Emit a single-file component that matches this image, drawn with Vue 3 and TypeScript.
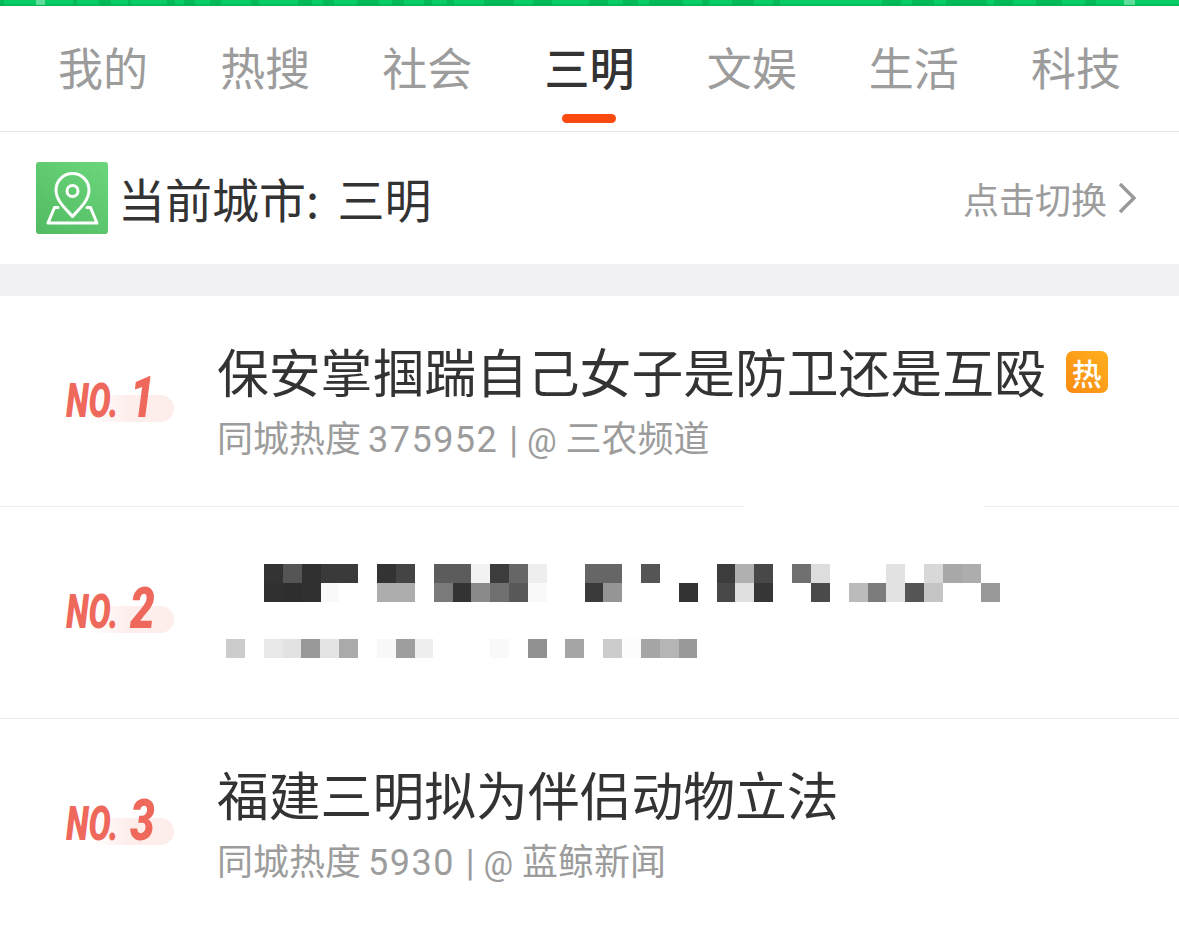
<script setup lang="ts">
type NewsItem = {
  rank: number
  title?: string
  hot?: boolean
  heat?: string
  source?: string
}

const tabs = ['我的', '热搜', '社会', '三明', '文娱', '生活', '科技']
const activeTab = '三明'

const items: NewsItem[] = [
  { rank: 1, title: '保安掌掴踹自己女子是防卫还是互殴', hot: true, heat: '375952', source: '三农频道' },
  { rank: 2 },
  { rank: 3, title: '福建三明拟为伴侣动物立法', heat: '5930', source: '蓝鲸新闻' },
]

// cut-off text of the banner above, as [left, width] pairs
const stripMarks: number[][] = [
  [0, 4], [73, 4], [99, 12], [128, 3], [167, 8], [184, 11], [210, 11], [251, 8], [298, 14], [323, 11],
  [357, 22], [392, 12], [424, 8], [447, 7], [484, 30], [533, 19], [589, 19], [623, 15], [649, 34],
  [702, 7], [732, 22], [773, 7], [882, 19], [912, 22], [946, 41], [994, 19], [1036, 26], [1085, 11],
]
const stripLights: number[][] = [[36, 9], [1124, 11]]

// grey values of the blurred-out headline, one entry per mosaic cell, '' = blank
const titleMosaic: string[][] = [
  ['333', '555', '303030', '3a3a3a', '3a3a3a', '', '333', '444', '', '5c5c5c', '5c5c5c', 'f2f2f2', '3c3c3c', '666', 'eee', '', '', '666', '666', '', '555', '', '', '', '3c3c3c', 'b0b0b0', '484848', '', '707070', 'ddd', '', '', '', 'e2e2e2', '', 'd8d8d8', 'a8a8a8', 'adadad', ''],
  ['303030', '2e2e2e', '303030', 'f9f9f9', '', '', 'adadad', 'adadad', '', '7a7a7a', '333', '8a8a8a', '707070', '585858', 'f9f9f9', '', '', '3a3a3a', '959595', '', '', '', '333', '', '484848', 'e0e0e0', '363636', '', '', '4a4a4a', '', 'bbb', '7c7c7c', 'e2e2e2', '555', 'c5c5c5', '', '', '999'],
]
const metaMosaic: string[] = ['ccc', '', 'e8e8e8', 'e2e2e2', '999', 'e4e4e4', 'aaa', '', 'f8f8f8', '9e9e9e', 'eee', '', '', '', 'f9f9f9', '', '919191', '', 'a5a5a5', '', 'ccc', 'fcfcfc', 'a5a5a5', 'b5b5b5', '999']

function cellColor(value: string) {
  return value ? `#${value}` : 'transparent'
}

function markStyle(mark: number[]) {
  return { left: `${mark[0]}px`, width: `${mark[1]}px` }
}
</script>

<template>
  <main class="page">
    <div class="top-strip">
      <span v-for="mark in stripMarks" :key="mark[0]" class="strip-mark" :style="markStyle(mark)"></span>
      <span v-for="mark in stripLights" :key="mark[0]" class="strip-mark light" :style="markStyle(mark)"></span>
    </div>

    <nav class="tabs">
      <div v-for="tab in tabs" :key="tab" class="tab" :class="{ active: tab === activeTab }">
        {{ tab }}
      </div>
    </nav>

    <section class="city-row">
      <div class="city-left">
        <span class="city-icon">
          <svg viewBox="0 0 72 72" width="72" height="72" fill="none" stroke="#fff" stroke-width="3" stroke-linejoin="round" stroke-linecap="round">
            <path d="M36.500 54.500 C30 47 20 39 20 28 a16.500 16.500 0 0 1 33 0 C53 39 43 47 36.500 54.500 Z" />
            <circle cx="36.500" cy="29" r="5.500" />
            <path d="M22 45.500 H18.500 L12 61 H61 L54.500 45.500 H51" />
          </svg>
        </span>
        <span class="city-name">当前城市: 三明</span>
      </div>
      <div class="city-switch">
        点击切换
        <svg viewBox="0 0 20 32" width="20" height="32" fill="none" stroke="#999" stroke-width="3.4">
          <path d="M3 2 L17 16 L3 30" />
        </svg>
      </div>
    </section>

    <div class="band"></div>

    <article v-for="item in items" :key="item.rank" class="news-item" :class="{ masked: !item.title }">
      <div class="rank">
        <span class="rank-pill"></span>
        <span class="rank-text"><span class="rank-no">NO.</span><span class="rank-num">{{ item.rank }}</span></span>
      </div>

      <div v-if="item.title" class="news-body">
        <h3 class="news-title">
          {{ item.title }}
          <span v-if="item.hot" class="hot-badge">热</span>
        </h3>
        <p class="news-meta">同城热度 <span class="heat">{{ item.heat }}</span> | <span class="at">@</span> {{ item.source }}</p>
      </div>

      <div v-else class="news-body mosaic-body">
        <div class="mosaic-title">
          <div v-for="(row, r) in titleMosaic" :key="r" class="mosaic-row">
            <span v-for="(cell, c) in row" :key="c" class="cell" :style="{ background: cellColor(cell) }"></span>
          </div>
        </div>
        <div class="mosaic-row mosaic-meta">
          <span v-for="(cell, c) in metaMosaic" :key="c" class="cell" :style="{ background: cellColor(cell) }"></span>
        </div>
      </div>
    </article>
  </main>
</template>

<style scoped>
.page {
  width: 1179px;
  height: 928px;
  overflow: hidden;
  background: #fff;
  font-family: 'Noto Sans CJK SC', 'Noto Sans', sans-serif;
}

.top-strip {
  position: relative;
  height: 6px;
  overflow: hidden;
  background: linear-gradient(#08cc64, #08cc64 3px, #02b552);
}

.strip-mark {
  position: absolute;
  top: 0;
  height: 5px;
  background: rgba(0, 150, 60, 0.3);
}

.strip-mark.light {
  background: rgba(255, 255, 255, 0.35);
}

.tabs {
  display: grid;
  grid-template-columns: repeat(7, 1fr);
  height: 125px;
  padding: 0 22px;
  border-bottom: 1px solid #e4e4e4;
}

.tab {
  position: relative;
  padding-top: 29px;
  text-align: center;
  font-size: 45px;
  line-height: 64px;
  color: #9c9c9c;
}

.tab.active {
  color: #333;
  font-weight: 500;
}

.tab.active::after {
  content: '';
  position: absolute;
  left: 50%;
  bottom: 8px;
  width: 54px;
  height: 9px;
  margin-left: -27px;
  border-radius: 5px;
  background: #fa4a10;
}

.city-row {
  display: flex;
  align-items: center;
  justify-content: space-between;
  height: 132px;
  padding: 0 42px 0 36px;
}

.city-left {
  display: flex;
  align-items: center;
  gap: 10px;
}

.city-icon {
  display: block;
  width: 72px;
  height: 72px;
  border-radius: 3px;
  background: linear-gradient(35deg, #52bb62, #6cd67c);
}

.city-icon svg {
  display: block;
}

.city-name {
  font-size: 47px;
  line-height: 64px;
  word-spacing: 8px;
  color: #333;
}

.city-switch {
  display: flex;
  align-items: center;
  gap: 10px;
  font-size: 36px;
  color: #9c9c9c;
}

.band {
  height: 32px;
  background: #f1f1f3;
}

.news-item {
  position: relative;
  display: flex;
  height: 210px;
  border-bottom: 1px solid #ececec;
}

.news-item.masked {
  height: 211px;
}

.news-item.masked::before {
  content: '';
  position: absolute;
  left: 745px;
  top: -1px;
  width: 238px;
  height: 1px;
  background: #fff;
}

.news-item:last-child {
  border-bottom: 0;
}

.rank {
  position: relative;
  flex: none;
  width: 217px;
}

.rank-pill {
  position: absolute;
  left: 90px;
  top: 99px;
  width: 84px;
  height: 27px;
  border-radius: 0 14px 14px 0;
  background: linear-gradient(90deg, rgba(253, 238, 236, 0), #fdeeec 45%);
}

.rank-text {
  position: absolute;
  left: 66px;
  top: 71px;
  display: flex;
  align-items: baseline;
  color: #ee695b;
  font-family: Roboto, 'Liberation Sans', sans-serif;
  font-weight: 900;
  font-style: italic;
  white-space: nowrap;
}

.rank-no {
  display: block;
  width: 64px;
  font-size: 48px;
  line-height: 60px;
  transform: scaleX(0.69);
  transform-origin: left center;
}

.rank-num {
  display: block;
  width: 25px;
  font-size: 58px;
  line-height: 60px;
  transform: scaleX(0.76);
  transform-origin: left center;
}

.news-body {
  flex: 1;
  padding-top: 39px;
}

.news-title {
  display: flex;
  align-items: center;
  gap: 20px;
  margin: 0;
  font-size: 51.800px;
  font-weight: 400;
  line-height: 72px;
  color: #333;
}

.hot-badge {
  display: block;
  width: 42px;
  height: 42px;
  margin-top: 2px;
  border-radius: 7px;
  background: linear-gradient(45deg, #f98a12, #ffb01f);
  color: #fff;
  font-size: 30px;
  font-weight: 500;
  line-height: 42px;
  text-align: center;
}

.news-meta {
  margin: 8px 0 0;
  font-family: Roboto, 'Noto Sans CJK SC', sans-serif;
  font-size: 36px;
  line-height: 50px;
  color: #9c9c9c;
}

.heat {
  margin-left: -2px;
  margin-right: 2px;
  letter-spacing: 1.500px;
}

.at {
  font-size: 33px;
}

.mosaic-body {
  padding-top: 57px;
}

.mosaic-title {
  margin-left: 47px;
}

.mosaic-row {
  display: flex;
  height: 19px;
}

.cell {
  display: block;
  flex: none;
  width: 18.870px;
  height: 19px;
}

.mosaic-meta {
  margin-top: 37px;
  margin-left: 9px;
}
</style>
